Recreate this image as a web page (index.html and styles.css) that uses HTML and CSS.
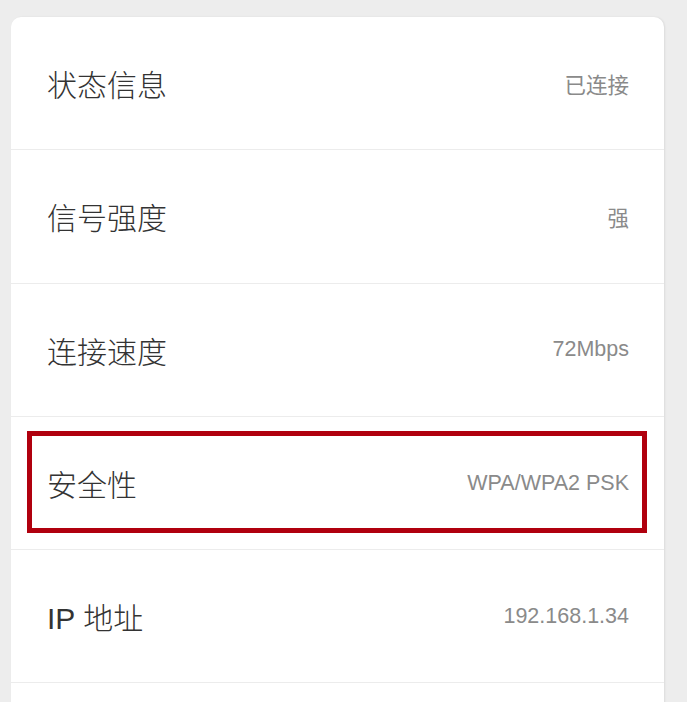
FILE: index.html
```html
<!DOCTYPE html>
<html lang="zh-CN">
<head>
    <meta charset="UTF-8">
    <meta name="viewport" content="width=device-width, initial-scale=1.0">
    <title>网络详情</title>
    <link rel="stylesheet" href="styles.css">
</head>
<body>
    <div class="card">
        <div class="row">
            <span class="label">状态信息</span>
            <span class="value">已连接</span>
        </div>
        <div class="row">
            <span class="label">信号强度</span>
            <span class="value">强</span>
        </div>
        <div class="row">
            <span class="label">连接速度</span>
            <span class="value">72Mbps</span>
        </div>
        <div class="row">
            <span class="label">安全性</span>
            <span class="value">WPA/WPA2 PSK</span>
            <div class="highlight"></div>
        </div>
        <div class="row">
            <span class="label">IP 地址</span>
            <span class="value">192.168.1.34</span>
        </div>
        <div class="row"></div>
    </div>
</body>
</html>
```

FILE: styles.css
```css
html, body {
    height: 100%;
    overflow: hidden;
}
body {
    margin: 0;
    padding: 17px 23px 0 11px;
    background-color: #ededed;
    font-family: "Liberation Sans", "Noto Sans CJK SC", sans-serif;
}
.card {
    background-color: #fff;
    border-radius: 10px;
    box-shadow: 1px 0 2px rgba(0, 0, 0, 0.08);
}
.row {
    position: relative;
    box-sizing: border-box;
    height: 133.3px;
    display: flex;
    justify-content: space-between;
    align-items: center;
    padding: 0 35px 0 36px;
    border-bottom: 1px solid #ececec;
}
.label {
    font-size: 30px;
    font-weight: 300;
    color: #333;
}
.value {
    font-size: 21.5px;
    color: #8a8a8a;
}
.highlight {
    position: absolute;
    top: 14px;
    left: 16px;
    right: 17px;
    bottom: 16px;
    border: 5px solid #b0000e;
}
```
